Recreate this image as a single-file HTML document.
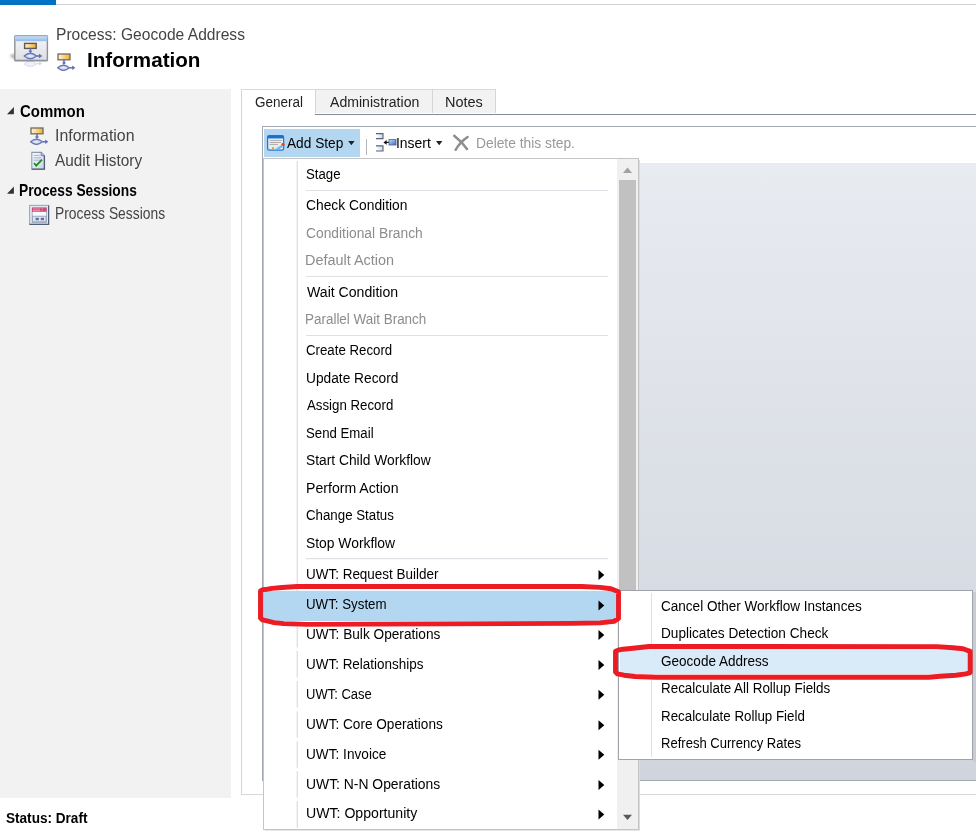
<!DOCTYPE html>
<html><head><meta charset='utf-8'>
<style>
html,body{margin:0;padding:0;}
body{width:976px;height:836px;overflow:hidden;position:relative;background:#fff;font-family:"Liberation Sans", sans-serif;}
.a{position:absolute;}
.t{position:absolute;white-space:nowrap;transform-origin:0 50%;}
</style></head><body>
<!-- top bar -->
<div class='a' style='left:56px;top:4px;width:920px;height:1px;background:#d2d2d2'></div>
<div class='a' style='left:0;top:0;width:56px;height:5px;background:#0072c6'></div>

<!-- big icon -->
<svg class='a' style='left:8px;top:30px' width='44' height='40' viewBox='0 0 44 40'>
  <defs>
    <linearGradient id='gTitle' x1='0' x2='0' y1='0' y2='1'><stop offset='0' stop-color='#d0e4fa'/><stop offset='1' stop-color='#94b9e8'/></linearGradient>
    <linearGradient id='gWin' x1='0' x2='0' y1='0' y2='1'><stop offset='0' stop-color='#f6f7f9'/><stop offset='1' stop-color='#dcdee2'/></linearGradient>
    <linearGradient id='gOrB' x1='0' x2='1' y1='0' y2='0'><stop offset='0' stop-color='#fff4d0'/><stop offset='1' stop-color='#f4ae2c'/></linearGradient>
    <radialGradient id='gDiB' cx='.5' cy='.5' r='.6'><stop offset='0' stop-color='#f0f0ff'/><stop offset='1' stop-color='#b8bce8'/></radialGradient>
    <linearGradient id='gSh' x1='1' x2='0' y1='0' y2='0'><stop offset='0' stop-color='#888' stop-opacity='.55'/><stop offset='1' stop-color='#888' stop-opacity='0'/></linearGradient>
    <linearGradient id='gRef' x1='0' x2='0' y1='0' y2='1'><stop offset='0' stop-color='#fff' stop-opacity='0'/><stop offset='1' stop-color='#fff' stop-opacity='1'/></linearGradient>
  </defs>
  <filter id='blur1' x='-50%' y='-50%' width='200%' height='200%'><feGaussianBlur stdDeviation='1.2'/></filter>
  <path d='M1.5 25.5 L7 23.5 L7 30 Z' fill='#9a9a9a' filter='url(#blur1)' opacity='.8'/>
  <rect x='6.8' y='5.8' width='32.6' height='24.8' fill='url(#gWin)'/>
  <path d='M6.8 5.8 V30.8 M39.4 5.8 V30.8' stroke='#8a9096' stroke-width='1.4'/>
  <rect x='6.8' y='5.4' width='32.6' height='5.8' fill='url(#gTitle)'/>
  <path d='M6.8 5.6 H39.4' stroke='#8eaad0' stroke-width='1.2'/>
  <path d='M6.8 30.6 H39.4' stroke='#8a9298' stroke-width='1.8'/>
  <rect x='16.6' y='13.4' width='11.6' height='5' fill='url(#gOrB)' stroke='#5c5a56' stroke-width='1.4'/>
  <path d='M22.4 18.4 V21.6' stroke='#5f6fc0' stroke-width='1.6'/>
  <path d='M20.4 20.8 L22.4 23.2 L24.4 20.8 Z' fill='#5f6fc0'/>
  <path d='M16.2 26 Q22.3 20.6 28.4 26 Q22.3 31.4 16.2 26 Z' fill='url(#gDiB)' stroke='#6878b8' stroke-width='1.3'/>
  <path d='M28.4 26 H31.8' stroke='#5f6fc0' stroke-width='1.6'/>
  <path d='M31 23.8 L34.4 26 L31 28.2 Z' fill='#5f6fc0'/>
  <g opacity='.35'>
    <path d='M16.2 34 Q22.3 29 28.4 34 Q22.3 39 16.2 34 Z' fill='#d8d8f4' stroke='#8a96cc' stroke-width='1'/>
    <path d='M28.4 33.6 H33' stroke='#8a96cc' stroke-width='1.2'/>
    <path d='M31 31.8 L34.4 33.6 L31 35.4 Z' fill='#8a96cc'/>
  </g>
</svg>

<svg width='0' height='0' style='position:absolute'>
      <defs>
        <linearGradient id='gOr' x1='0' x2='1' y1='0' y2='0'><stop offset='0' stop-color='#fff6d8'/><stop offset='1' stop-color='#f4ae2c'/></linearGradient>
        <radialGradient id='gDi' cx='.5' cy='.5' r='.6'><stop offset='0' stop-color='#eeeeff'/><stop offset='1' stop-color='#b8bce8'/></radialGradient>
      </defs></svg>
<svg class='a' style='left:56.5px;top:52.8px' width='19' height='18' viewBox='0 0 19 18'>
        <rect x='1' y='1' width='12' height='5.8' fill='url(#gOr)' stroke='#6e6a64' stroke-width='1.3'/>
        <path d='M7 6.8 V10.6' stroke='#5f6fb8' stroke-width='1.6'/>
        <path d='M4.9 9.6 L7 12 L9.1 9.6 Z' fill='#5f6fb8'/>
        <path d='M0.6 14.8 Q6.4 9.6 12.4 14.8 Q6.4 20 0.6 14.8 Z' fill='url(#gDi)' stroke='#6878b4' stroke-width='1.3'/>
        <path d='M12.4 14.8 H16' stroke='#5f6fb8' stroke-width='1.5'/>
        <path d='M15.2 12.6 L18.4 14.8 L15.2 17 Z' fill='#5f6fb8'/>
        </svg>

<!-- nav -->
<div class='a' style='left:0;top:89px;width:231px;height:709px;background:#f2f2f2'></div>
<svg class='a' style='left:0;top:100px' width='20' height='100' viewBox='0 100 20 100'>
  <path d='M13.9 107 L13.9 114.3 L7 114.3 Z' fill='#333'/>
  <path d='M13.9 186.4 L13.9 193.7 L7 193.7 Z' fill='#333'/>
</svg>
<svg class='a' style='left:30px;top:127px' width='19' height='18' viewBox='0 0 19 18'>
        <rect x='1' y='1' width='12' height='5.8' fill='url(#gOr)' stroke='#6e6a64' stroke-width='1.3'/>
        <path d='M7 6.8 V10.6' stroke='#5f6fb8' stroke-width='1.6'/>
        <path d='M4.9 9.6 L7 12 L9.1 9.6 Z' fill='#5f6fb8'/>
        <path d='M0.6 14.8 Q6.4 9.6 12.4 14.8 Q6.4 20 0.6 14.8 Z' fill='url(#gDi)' stroke='#6878b4' stroke-width='1.3'/>
        <path d='M12.4 14.8 H16' stroke='#5f6fb8' stroke-width='1.5'/>
        <path d='M15.2 12.6 L18.4 14.8 L15.2 17 Z' fill='#5f6fb8'/>
        </svg>
<svg class='a' style='left:30px;top:151px' width='16' height='20' viewBox='30 151 16 20'>
  <defs><linearGradient id='gDoc' x1='0' x2='1' y1='0' y2='1'><stop offset='0' stop-color='#fbfcfe'/><stop offset='1' stop-color='#c8d2e2'/></linearGradient></defs>
  <path d='M31.8 152.4 H41.2 L44.4 155.6 V169.2 H31.8 Z' fill='url(#gDoc)' stroke='#8a9ab2' stroke-width='1.1'/>
  <path d='M44.4 155.6 V169.2 H31.8' fill='none' stroke='#4e5f7c' stroke-width='1.3'/>
  <path d='M41.2 152.4 V155.6 H44.4' fill='#b8c4d6' stroke='#6a7b96' stroke-width='0.9'/>
  <path d='M33.6 155.4 H39.5 M33.6 157.8 H41 M33.6 160.2 H41' stroke='#a6b6d0' stroke-width='1'/>
  <path d='M34 163 L36.2 165.6 L42 159.6' fill='none' stroke='#1f8a24' stroke-width='1.8'/>
</svg>
<svg class='a' style='left:28px;top:204px' width='22' height='22' viewBox='28 204 22 22'>
  <rect x='29.6' y='205.4' width='19' height='19' fill='#e4e9f2' stroke='#9ca9bd' stroke-width='1.1'/>
  <path d='M48.6 205.4 V224.4 H29.6' fill='none' stroke='#4f5e7c' stroke-width='1.2'/>
  <rect x='32.2' y='207.8' width='14.2' height='14.6' fill='#f8f9fb' stroke='#9aa6ba' stroke-width='0.8'/>
  <rect x='32' y='207.6' width='14.6' height='4.2' fill='#d24a78'/>
  <path d='M33 208.9 H40.2 M33 210.5 H40.2' stroke='#f0b0c6' stroke-width='0.7'/><path d='M42.3 208.2 V211.4' stroke='#f6d0dc' stroke-width='0.8' stroke-dasharray='0.8 0.8'/>
  <rect x='32.6' y='216.2' width='13.4' height='5.6' fill='#dfe4ee' stroke='#8f9bb0' stroke-width='0.8'/>
  <rect x='35.6' y='217.8' width='3.2' height='2.4' fill='#5a6ea8'/>
  <rect x='40.8' y='217.8' width='3.2' height='2.4' fill='#5a6ea8'/>
</svg>

<!-- tabs -->
<div class='a' style='left:242px;top:89px;width:73px;height:1px;background:#d9d9d9'></div>
<div class='a' style='left:315px;top:89px;width:117px;height:24px;background:#f2f2f2;border-left:1px solid #d6d6d6;border-top:1px solid #d9d9d9;box-sizing:border-box'></div>
<div class='a' style='left:432px;top:89px;width:64px;height:24px;background:#f2f2f2;border-left:1px solid #d6d6d6;border-right:1px solid #d6d6d6;border-top:1px solid #d9d9d9;box-sizing:border-box'></div>
<div class='a' style='left:315px;top:114px;width:661px;height:1px;background:#868a94'></div>
<div class='a' style='left:241px;top:89px;width:1px;height:706px;background:#d6d6d6'></div>
<div class='a' style='left:241px;top:794px;width:735px;height:1px;background:#d6d6d6'></div>

<!-- toolbar container -->
<div class='a' style='left:262px;top:126px;width:714px;height:1px;background:#a3a9b3'></div>
<div class='a' style='left:262px;top:126px;width:1px;height:655px;background:#a3a9b3'></div>
<div class='a' style='left:262px;top:780px;width:714px;height:1px;background:#a3a9b3'></div>
<div class='a' style='left:639px;top:163px;width:337px;height:617px;background:linear-gradient(#e8ebf0,#d0d4dd)'></div>

<div class='a' style='left:264px;top:129px;width:96px;height:28px;background:#b3d7f0'></div>
<svg class='a' style='left:266px;top:134px' width='22' height='18' viewBox='266 134 22 18'>
  <defs><linearGradient id='gAs' x1='0' x2='0' y1='0' y2='1'><stop offset='0' stop-color='#fafafa'/><stop offset='1' stop-color='#e6e6e6'/></linearGradient></defs>
  <rect x='267.6' y='135.6' width='16' height='14.6' rx='1.8' fill='url(#gAs)' stroke='#1e78d6' stroke-width='1.3'/>
  <rect x='267.6' y='135.6' width='16' height='3' rx='1' fill='#1a72d0'/>
  <path d='M269.6 140.3 H282 M269.6 142.4 H281 M269.6 144.4 H278' stroke='#9a9a9a' stroke-width='0.85'/>
  <path d='M275 149.8 L281.4 145 L283 146.6 L277.6 150.2 Z' fill='#74b0ee'/>
  <path d='M279.2 146.2 L274.4 149.4' stroke='#a8d0f6' stroke-width='0.8'/>
  <ellipse cx='283' cy='144.4' rx='1.7' ry='1.4' fill='#e2481e'/>
  <rect x='272' y='147.2' width='2' height='2' fill='#d0a850'/>
</svg>
<svg class='a' style='left:346px;top:139px' width='10' height='8' viewBox='346 139 10 8'><path d='M348.2 141 H354.6 L351.4 145.2 Z' fill='#222'/></svg>
<div class='a' style='left:366px;top:139px;width:1px;height:16px;background:#b4b8be'></div>
<svg class='a' style='left:374px;top:131px' width='24' height='22' viewBox='374 131 24 22'>
  <defs><linearGradient id='gIn' x1='0' x2='1' y1='0' y2='0'><stop offset='0' stop-color='#ffffff'/><stop offset='1' stop-color='#cfd8e8'/></linearGradient>
  <linearGradient id='gIb' x1='0' x2='1' y1='0' y2='1'><stop offset='0' stop-color='#cfe0fb'/><stop offset='1' stop-color='#2c64d6'/></linearGradient></defs>
  <path d='M376 133.6 H383 V138.6 H376' fill='url(#gIn)' stroke='#56627a' stroke-width='1.1'/>
  <path d='M376 145.9 H383 V151 H376' fill='url(#gIn)' stroke='#56627a' stroke-width='1.1'/>
  <path d='M385.6 142.4 H389' stroke='#111' stroke-width='1.2'/>
  <path d='M383.4 142.4 L386.6 140 L386.6 144.8 Z' fill='#111'/>
  <rect x='389' y='139.6' width='7' height='5.4' fill='url(#gIb)' stroke='#5e6a80' stroke-width='0.9'/>
</svg>
<svg class='a' style='left:434px;top:139px' width='10' height='8' viewBox='434 139 10 8'><path d='M436 141 H442.4 L439.2 145.2 Z' fill='#222'/></svg>
<svg class='a' style='left:450px;top:132px' width='22' height='22' viewBox='450 132 22 22'>
  <path d='M454.2 135.8 Q461.5 141.4 467 149' fill='none' stroke='#8e8e8e' stroke-width='2.5' stroke-linecap='round'/>
  <path d='M467.6 137 Q460.5 141.6 455.6 149.8' fill='none' stroke='#8e8e8e' stroke-width='2.5' stroke-linecap='round'/>
</svg>

<!-- menu -->
<div class='a' style='left:263px;top:158px;width:376px;height:672px;background:#fff;border:1px solid #c4c4c4;box-sizing:border-box'></div>
<div class='a' style='left:639px;top:160px;width:1px;height:671px;background:#dcdcdc'></div>
<div class='a' style='left:265px;top:830px;width:375px;height:1px;background:#e6e6e6'></div>
<div class='a' style='left:617px;top:159px;width:21px;height:670px;background:#f0f0f0'></div>
<div class='a' style='left:619px;top:180px;width:17px;height:520px;background:#c1c1c1'></div>
<svg class='a' style='left:617px;top:160px' width='21' height='670' viewBox='617 160 21 670'>
  <path d='M623 173 L627.5 167.6 L632 173 Z' fill='#a2a2a2'/>
  <path d='M623 814.8 L627.5 820 L632 814.8 Z' fill='#5a5a5a'/>
</svg>
<div class='a' style='left:264px;top:591px;width:353px;height:30px;background:#b3d7f0'></div>
<svg class='a' style='left:263px;top:158px' width='376' height='672' viewBox='263 158 376 672'>
  <g fill='#dfe1e5'>
    <rect x='296.6' y='161' width='1.4' height='430'/>
    <rect x='296.6' y='651' width='1.4' height='26.5'/><rect x='296.6' y='681' width='1.4' height='26.5'/><rect x='296.6' y='711.3' width='1.4' height='26.5'/><rect x='296.6' y='741.2' width='1.4' height='26.5'/><rect x='296.6' y='771.2' width='1.4' height='26.5'/><rect x='296.6' y='801.2' width='1.4' height='26.5'/><rect x='296.6' y='626.5' width='1.4' height='21'/>
  </g>
  <g fill='#dde0e5'>
    <rect x='306' y='190' width='302' height='1'/>
    <rect x='306' y='276' width='302' height='1'/>
    <rect x='306' y='335' width='302' height='1'/>
    <rect x='306' y='558' width='302' height='1.2'/>
  </g>
  <g fill='#000'><path d='M598.5 570.1 L604.3 575.1 L598.5 580.1 Z'/><path d='M598.5 600.5 L604.3 605.5 L598.5 610.5 Z'/><path d='M598.5 630.0 L604.3 635.0 L598.5 640.0 Z'/><path d='M598.5 660.0 L604.3 665.0 L598.5 670.0 Z'/><path d='M598.5 689.8 L604.3 694.8 L598.5 699.8 Z'/><path d='M598.5 720.3 L604.3 725.3 L598.5 730.3 Z'/><path d='M598.5 749.8 L604.3 754.8 L598.5 759.8 Z'/><path d='M598.5 780.1 L604.3 785.1 L598.5 790.1 Z'/><path d='M598.5 809.6 L604.3 814.6 L598.5 819.6 Z'/></g>
</svg>

<!-- submenu -->
<div class='a' style='left:618px;top:590px;width:355px;height:170px;background:#fff;border:1px solid #a0a4aa;box-sizing:border-box'></div>
<div class='a' style='left:973px;top:592px;width:3px;height:170px;background:#c8ccd2'></div>
<div class='a' style='left:620px;top:762px;width:356px;height:0px;background:#c8ccd2'></div>
<div class='a' style='left:651px;top:593px;width:1.4px;height:164px;background:#dfe1e5'></div>
<div class='a' style='left:620px;top:649px;width:351px;height:25px;background:#d9eaf8'></div>

<div class='t' style='left:55.70px;top:26.00px;font-size:15px;line-height:18px;font-weight:400;color:#444;transform:scale(1.0394,1.070);transform-origin:0 13.00px'>Process: Geocode Address</div>
<div class='t' style='left:86.57px;top:48.80px;font-size:19.4px;line-height:23px;font-weight:700;color:#000;transform:scaleX(1.0638);transform-origin:0 17.00px'>Information</div>
<div class='t' style='left:19.90px;top:102.90px;font-size:15px;line-height:18px;font-weight:700;color:#000;transform:scale(0.9984,1.100);transform-origin:0 13.00px'>Common</div>
<div class='t' style='left:54.58px;top:126.90px;font-size:15px;line-height:18px;font-weight:400;color:#444;transform:scale(1.0598,1.080);transform-origin:0 13.00px'>Information</div>
<div class='t' style='left:55.10px;top:152.10px;font-size:15px;line-height:18px;font-weight:400;color:#444;transform:scale(1.0247,1.080);transform-origin:0 13.00px'>Audit History</div>
<div class='t' style='left:19.28px;top:181.70px;font-size:15px;line-height:18px;font-weight:700;color:#000;transform:scale(0.9176,1.100);transform-origin:0 13.00px'>Process Sessions</div>
<div class='t' style='left:55.25px;top:205.40px;font-size:15px;line-height:18px;font-weight:400;color:#444;transform:scale(0.9234,1.080);transform-origin:0 13.00px'>Process Sessions</div>
<div class='t' style='left:6.46px;top:809.80px;font-size:14px;line-height:17px;font-weight:700;color:#000;transform:scaleX(0.9696);transform-origin:0 13.00px'>Status: Draft</div>
<div class='t' style='left:254.68px;top:94.00px;font-size:14px;line-height:17px;font-weight:400;color:#222;transform:scaleX(0.9617);transform-origin:0 13.00px'>General</div>
<div class='t' style='left:329.90px;top:94.00px;font-size:14px;line-height:17px;font-weight:400;color:#222;transform:scaleX(1.0068);transform-origin:0 13.00px'>Administration</div>
<div class='t' style='left:445.17px;top:94.00px;font-size:14px;line-height:17px;font-weight:400;color:#222;transform:scaleX(1.0343);transform-origin:0 13.00px'>Notes</div>
<div class='t' style='left:287.40px;top:135.00px;font-size:14px;line-height:17px;font-weight:400;color:#000;transform:scaleX(0.9772);transform-origin:0 13.00px'>Add Step</div>
<div class='t' style='left:396.16px;top:135.10px;font-size:14px;line-height:17px;font-weight:400;color:#000;transform:scaleX(0.9956);transform-origin:0 13.00px'>Insert</div>
<div class='t' style='left:476.37px;top:135.10px;font-size:14px;line-height:17px;font-weight:400;color:#999;transform:scaleX(0.9852);transform-origin:0 13.00px'>Delete this step.</div>
<div class='t' style='left:306.13px;top:166.30px;font-size:14px;line-height:17px;font-weight:400;color:#000;transform:scaleX(0.9437);transform-origin:0 13.00px'>Stage</div>
<div class='t' style='left:305.86px;top:196.90px;font-size:14px;line-height:17px;font-weight:400;color:#000;transform:scaleX(0.9877);transform-origin:0 13.00px'>Check Condition</div>
<div class='t' style='left:305.86px;top:225.30px;font-size:14px;line-height:17px;font-weight:400;color:#8c8c8c;transform:scaleX(0.9867);transform-origin:0 13.00px'>Conditional Branch</div>
<div class='t' style='left:305.31px;top:252.00px;font-size:14px;line-height:17px;font-weight:400;color:#8c8c8c;transform:scaleX(1.0303);transform-origin:0 13.00px'>Default Action</div>
<div class='t' style='left:306.60px;top:284.00px;font-size:14px;line-height:17px;font-weight:400;color:#000;transform:scaleX(1.0072);transform-origin:0 13.00px'>Wait Condition</div>
<div class='t' style='left:305.40px;top:311.20px;font-size:14px;line-height:17px;font-weight:400;color:#8c8c8c;transform:scaleX(0.9602);transform-origin:0 13.00px'>Parallel Wait Branch</div>
<div class='t' style='left:305.89px;top:342.20px;font-size:14px;line-height:17px;font-weight:400;color:#000;transform:scaleX(0.9464);transform-origin:0 13.00px'>Create Record</div>
<div class='t' style='left:305.62px;top:370.20px;font-size:14px;line-height:17px;font-weight:400;color:#000;transform:scaleX(0.9810);transform-origin:0 13.00px'>Update Record</div>
<div class='t' style='left:306.60px;top:397.20px;font-size:14px;line-height:17px;font-weight:400;color:#000;transform:scaleX(0.9474);transform-origin:0 13.00px'>Assign Record</div>
<div class='t' style='left:306.13px;top:425.10px;font-size:14px;line-height:17px;font-weight:400;color:#000;transform:scaleX(0.9438);transform-origin:0 13.00px'>Send Email</div>
<div class='t' style='left:306.11px;top:452.20px;font-size:14px;line-height:17px;font-weight:400;color:#000;transform:scaleX(0.9857);transform-origin:0 13.00px'>Start Child Workflow</div>
<div class='t' style='left:305.59px;top:480.00px;font-size:14px;line-height:17px;font-weight:400;color:#000;transform:scaleX(1.0078);transform-origin:0 13.00px'>Perform Action</div>
<div class='t' style='left:305.89px;top:507.20px;font-size:14px;line-height:17px;font-weight:400;color:#000;transform:scaleX(0.9486);transform-origin:0 13.00px'>Change Status</div>
<div class='t' style='left:306.11px;top:535.10px;font-size:14px;line-height:17px;font-weight:400;color:#000;transform:scaleX(0.9899);transform-origin:0 13.00px'>Stop Workflow</div>
<div class='t' style='left:305.64px;top:565.90px;font-size:14px;line-height:17px;font-weight:400;color:#000;transform:scaleX(0.9619);transform-origin:0 13.00px'>UWT: Request Builder</div>
<div class='t' style='left:305.65px;top:596.30px;font-size:14px;line-height:17px;font-weight:400;color:#000;transform:scaleX(0.9506);transform-origin:0 13.00px'>UWT: System</div>
<div class='t' style='left:305.62px;top:625.80px;font-size:14px;line-height:17px;font-weight:400;color:#000;transform:scaleX(0.9754);transform-origin:0 13.00px'>UWT: Bulk Operations</div>
<div class='t' style='left:305.64px;top:655.80px;font-size:14px;line-height:17px;font-weight:400;color:#000;transform:scaleX(0.9615);transform-origin:0 13.00px'>UWT: Relationships</div>
<div class='t' style='left:305.67px;top:685.60px;font-size:14px;line-height:17px;font-weight:400;color:#000;transform:scaleX(0.9300);transform-origin:0 13.00px'>UWT: Case</div>
<div class='t' style='left:305.63px;top:716.10px;font-size:14px;line-height:17px;font-weight:400;color:#000;transform:scaleX(0.9713);transform-origin:0 13.00px'>UWT: Core Operations</div>
<div class='t' style='left:305.63px;top:745.60px;font-size:14px;line-height:17px;font-weight:400;color:#000;transform:scaleX(0.9741);transform-origin:0 13.00px'>UWT: Invoice</div>
<div class='t' style='left:305.61px;top:775.90px;font-size:14px;line-height:17px;font-weight:400;color:#000;transform:scaleX(0.9918);transform-origin:0 13.00px'>UWT: N-N Operations</div>
<div class='t' style='left:305.59px;top:805.40px;font-size:14px;line-height:17px;font-weight:400;color:#000;transform:scaleX(1.0073);transform-origin:0 13.00px'>UWT: Opportunity</div>
<div class='t' style='left:660.87px;top:597.80px;font-size:14px;line-height:17px;font-weight:400;color:#000;transform:scaleX(0.9673);transform-origin:0 13.00px'>Cancel Other Workflow Instances</div>
<div class='t' style='left:660.63px;top:624.80px;font-size:14px;line-height:17px;font-weight:400;color:#000;transform:scaleX(0.9731);transform-origin:0 13.00px'>Duplicates Detection Check</div>
<div class='t' style='left:660.87px;top:652.70px;font-size:14px;line-height:17px;font-weight:400;color:#000;transform:scaleX(0.9669);transform-origin:0 13.00px'>Geocode Address</div>
<div class='t' style='left:660.64px;top:679.90px;font-size:14px;line-height:17px;font-weight:400;color:#000;transform:scaleX(0.9581);transform-origin:0 13.00px'>Recalculate All Rollup Fields</div>
<div class='t' style='left:660.65px;top:707.70px;font-size:14px;line-height:17px;font-weight:400;color:#000;transform:scaleX(0.9528);transform-origin:0 13.00px'>Recalculate Rollup Field</div>
<div class='t' style='left:660.67px;top:734.80px;font-size:14px;line-height:17px;font-weight:400;color:#000;transform:scaleX(0.9318);transform-origin:0 13.00px'>Refresh Currency Rates</div>

<!-- red annotations -->
<svg class='a' style='left:0;top:0' width='976' height='836' viewBox='0 0 976 836'>
  <g fill='none' stroke='#ed1c24' stroke-width='4.9' stroke-linejoin='round'>
  <path d='M260.5 596 L260.5 591 L263 589.6 L267.5 589.2 L272 588.4 L282 587.5 L297 586.5 L582 586.5 L600 587.4 L611 588.8 L618.5 591.8 L618.5 618.5 L614 621.4 L600 622.9 L572 623.4 L307 624.4 L284 623.6 L274 622.6 L268 621.2 L262.5 619.9 L260.5 618 Z'/>
  <path d='M615.5 655 L615.5 651.2 L618 650.2 L623 649.2 L633 648.2 L649 646.5 L937 646.6 L953 647.7 L963 648.7 L970.2 651.4 L970.2 672.6 L966 673.9 L956 675.2 L940 676.2 L929 677.2 L656 677.3 L635 676.5 L624 675.2 L617.5 673.9 L615.5 672 Z'/>
  </g>
</svg>
</body></html>
